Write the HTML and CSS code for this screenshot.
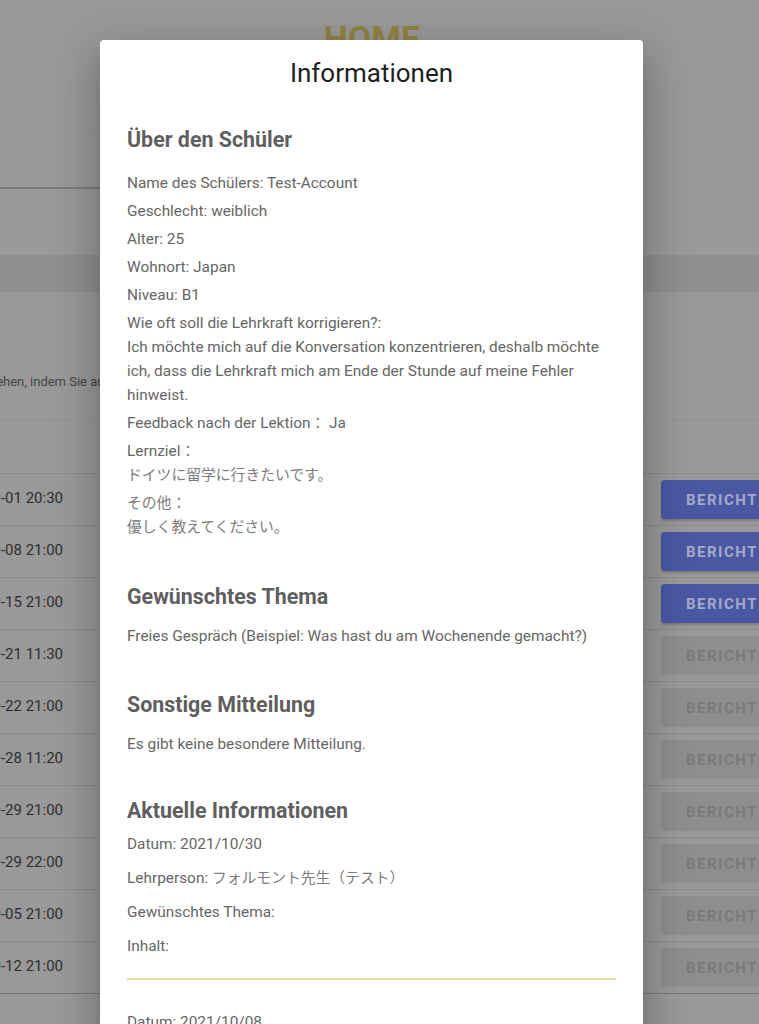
FILE: index.html
```html
<!DOCTYPE html>
<html lang="de">
<head>
<meta charset="utf-8">
<title>HOME</title>
<link rel="stylesheet" href="styles.css">
</head>
<body>
<div class="page">
  <header class="top"><h1 class="home">HOME</h1></header>
  <div class="tabs"><div class="tab-active"></div></div>
  <div class="gap"></div>
  <div class="band"></div>
  <div class="note"><div class="note-clip"><span>Sie können die Berichte ansehen, indem Sie auf</span></div></div>
  <div class="thead"></div>
  <div class="rows">
    <div class="row"><div class="date"><span>2021-09-01 20:30</span></div><div></div><div class="btn btn-on">BERICHT</div></div>
    <div class="row"><div class="date"><span>2021-09-08 21:00</span></div><div></div><div class="btn btn-on">BERICHT</div></div>
    <div class="row"><div class="date"><span>2021-09-15 21:00</span></div><div></div><div class="btn btn-on">BERICHT</div></div>
    <div class="row"><div class="date"><span>2021-09-21 11:30</span></div><div></div><div class="btn btn-off">BERICHT</div></div>
    <div class="row"><div class="date"><span>2021-09-22 21:00</span></div><div></div><div class="btn btn-off">BERICHT</div></div>
    <div class="row"><div class="date"><span>2021-09-28 11:20</span></div><div></div><div class="btn btn-off">BERICHT</div></div>
    <div class="row"><div class="date"><span>2021-09-29 21:00</span></div><div></div><div class="btn btn-off">BERICHT</div></div>
    <div class="row"><div class="date"><span>2021-09-29 22:00</span></div><div></div><div class="btn btn-off">BERICHT</div></div>
    <div class="row"><div class="date"><span>2021-10-05 21:00</span></div><div></div><div class="btn btn-off">BERICHT</div></div>
    <div class="row row-last"><div class="date"><span>2021-10-12 21:00</span></div><div></div><div class="btn btn-off">BERICHT</div></div>
  </div>
</div>

<div class="dialog">
  <h2 class="dialog-title">Informationen</h2>
  <div class="dialog-body">
    <section class="sec sec-first">
      <h3 class="sec-title sec-title-first">Über den Schüler</h3>
      <p>Name des Schülers: Test-Account</p>
      <p>Geschlecht: weiblich</p>
      <p>Alter: 25</p>
      <p>Wohnort: Japan</p>
      <p>Niveau: B1</p>
      <p>Wie oft soll die Lehrkraft korrigieren?:<br>Ich möchte mich auf die Konversation konzentrieren, deshalb möchte ich, dass die Lehrkraft mich am Ende der Stunde auf meine Fehler hinweist.</p>
      <p>Feedback nach der Lektion<span class="ja">：</span>&nbsp;Ja</p>
      <p>Lernziel<span class="ja">：</span><br><span class="ja">ドイツに留学に行きたいです。</span></p>
      <p><span class="ja">その他：</span><br><span class="ja">優しく教えてください。</span></p>
    </section>
    <section class="sec sec-topic">
      <h3 class="sec-title">Gewünschtes Thema</h3>
      <p>Freies Gespräch (Beispiel: Was hast du am Wochenende gemacht?)</p>
    </section>
    <section class="sec sec-msg">
      <h3 class="sec-title">Sonstige Mitteilung</h3>
      <p>Es gibt keine besondere Mitteilung.</p>
    </section>
    <section class="sec sec-recent">
      <h3 class="sec-title sec-title-tight">Aktuelle Informationen</h3>
      <div class="entry">
        <p>Datum: 2021/10/30</p>
        <p>Lehrperson: <span class="ja">フォルモント先生（テスト）</span></p>
        <p>Gewünschtes Thema:</p>
        <p>Inhalt:</p>
      </div>
      <div class="entry entry-next">
        <p>Datum: 2021/10/08</p>
        <p>Lehrperson: <span class="ja">フォルモント先生（テスト）</span></p>
        <p>Gewünschtes Thema:</p>
        <p>Inhalt:</p>
      </div>
    </section>
  </div>
</div>
</body>
</html>
```

FILE: styles.css
```css
* { box-sizing: border-box; }
html, body { margin: 0; padding: 0; }
body {
  width: 759px;
  height: 1024px;
  overflow: hidden;
  position: relative;
  background: #999999;
  font-family: Roboto, "Noto Sans CJK JP", sans-serif;
}

/* dimmed page behind the dialog (colours already composited with the scrim) */
.page { background: #999999; }
.top {
  height: 134px;
  border-bottom: 1px solid #939393;
  padding-right: 15px;
  text-align: center;
}
.home {
  margin: 0;
  padding-top: 18px;
  font-size: 34px;
  line-height: 40px;
  font-weight: 700;
  color: #8f8342;
}
.tabs { height: 55px; }
.tab-active {
  width: 360px;
  height: 55px;
  border-bottom: 2px solid #7b7b7b;
}
.gap { height: 66px; }
.band { height: 37px; background: #8f8f8f; }
.note {
  height: 129px;
  padding-top: 82px;
  border-bottom: 1px solid #929292;
}
.note-clip {
  width: 109px;
  overflow: hidden;
  display: flex;
  justify-content: flex-end;
  white-space: nowrap;
  font-size: 13px;
  line-height: 16px;
  color: #454545;
}
.note-clip span { flex: none; }
.thead {
  height: 53px;
  border-bottom: 1px solid #8c8c8c;
}
.row {
  height: 52px;
  border-bottom: 1px solid #8b8b8b;
  display: grid;
  grid-template-columns: 63px 598px 140px;
  align-items: center;
}
.row-last { border-bottom-color: #777777; }
.date {
  overflow: hidden;
  display: flex;
  justify-content: flex-end;
  white-space: nowrap;
  font-size: 15px;
  line-height: 20px;
  color: #2e2e2e;
  padding-bottom: 4px;
}
.date span { flex: none; }
.btn {
  height: 39px;
  border-radius: 4px;
  padding-left: 25px;
  display: flex;
  align-items: center;
  font-size: 15px;
  font-weight: 700;
  letter-spacing: 1.5px;
}
.btn-on {
  background: #4a58a3;
  color: #a3a9c7;
  box-shadow: 0 2px 2px rgba(0,0,0,0.18);
}
.btn-off {
  background: #8e8e8e;
  color: #7a7a7a;
}

/* dialog */
.dialog {
  position: absolute;
  top: 40px;
  left: 100px;
  width: 543px;
  height: 1010px;
  background: #ffffff;
  border-radius: 4px;
  overflow: hidden;
  box-shadow: 0 11px 15px -7px rgba(0,0,0,0.2), 0 24px 38px 3px rgba(0,0,0,0.14), 0 9px 46px 8px rgba(0,0,0,0.12);
}
.dialog-title {
  margin: 0;
  padding-top: 17px;
  font-size: 26px;
  line-height: 32px;
  font-weight: 400;
  color: #1f1f1f;
  text-align: center;
}
.dialog-body {
  padding: 0 27px 0 27px;
  font-size: 15.4px;
  color: #666666;
}
.dialog-body p {
  margin: 0 0 4px;
  line-height: 24px;
}
.ja {
  font-family: "Noto Sans CJK JP", sans-serif;
  font-size: 14.8px;
  line-height: 14px;
  color: #7d7d7d;
}
.sec-first { margin-top: 35px; }
.sec-topic { margin-top: 42px; }
.sec-msg { margin-top: 41px; }
.sec-recent { margin-top: 39px; }
.sec-title {
  margin: 0 0 11px;
  font-size: 21.4px;
  line-height: 32px;
  font-weight: 700;
  color: #5f5f5f;
}
.sec-title-first { margin-bottom: 15px; }
.sec-title-tight { margin-bottom: 5px; }
.entry {
  padding-bottom: 10px;
  border-bottom: 2px solid #e4de9c;
}
.entry p { margin-bottom: 10px; }
.entry-next { padding-top: 30px; }
```
